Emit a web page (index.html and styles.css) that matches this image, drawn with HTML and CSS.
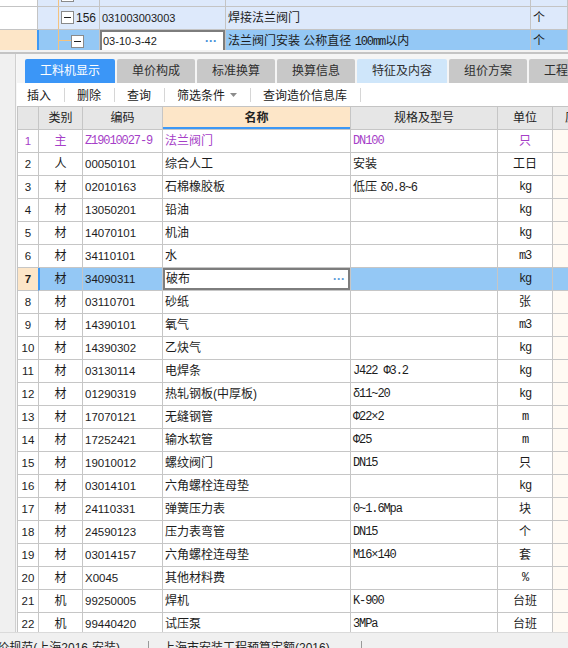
FILE: index.html
```html
<!DOCTYPE html>
<html lang="zh-CN">
<head>
<meta charset="utf-8">
<title>工料机显示</title>
<link rel="stylesheet" href="styles.css">
</head>
<body>
<div class="top">
  <div class="trow part">
    <div class="tc c0"></div>
    <div class="tc tree"><svg class="tsvg" width="61" height="7"><line x1="20.5" y1="0" x2="20.5" y2="7" stroke="#f4c27e"/><rect x="23.5" y="-10.5" width="12" height="12" fill="#fff" stroke="#8a8a8a"/></svg></div>
    <div class="tc"></div>
    <div class="tc"></div>
    <div class="tc"></div>
  </div>
  <div class="trow r156">
    <div class="tc c0"></div>
    <div class="tc tree"><svg class="tsvg" width="61" height="22"><line x1="20.5" y1="0" x2="20.5" y2="23" stroke="#f4c27e"/><rect x="23.5" y="4.5" width="12" height="12" fill="#fff" stroke="#8a8a8a"/><line x1="26" y1="10.5" x2="33" y2="10.5" stroke="#222"/></svg><span class="tnum">156</span></div>
    <div class="tc tcode">031003003003</div>
    <div class="tc">焊接法兰阀门</div>
    <div class="tc">个</div>
  </div>
  <div class="trow tsel">
    <div class="tc c0"></div>
    <div class="tc tree"><svg class="tsvg" width="61" height="22"><line x1="20.5" y1="0" x2="20.5" y2="23" stroke="#f4c27e"/><line x1="20" y1="10.5" x2="33" y2="10.5" stroke="#f4c27e"/><rect x="33.5" y="5.5" width="12" height="12" fill="#fff" stroke="#8a8a8a"/><line x1="36" y1="11.5" x2="43" y2="11.5" stroke="#222"/></svg></div>
    <div class="tc edit tcode">03-10-3-42<span class="dots">···</span></div>
    <div class="tc">法兰阀门安装 公称直径 <span class="m">100mm</span>以内</div>
    <div class="tc">个</div>
  </div>
</div>
<div class="split"></div>
<div class="body">
  <div class="side"></div>
  <div class="main">
    <div class="tabs">
      <div class="tab active">工料机显示</div>
      <div class="tab">单价构成</div>
      <div class="tab">标准换算</div>
      <div class="tab">换算信息</div>
      <div class="tab light">特征及内容</div>
      <div class="tab">组价方案</div>
      <div class="tab">工程量明细</div>
    </div>
    <div class="toolbar">
      <span class="tool first">插入</span><i class="sep"></i>
      <span class="tool">删除</span><i class="sep"></i>
      <span class="tool">查询</span><i class="sep"></i>
      <span class="tool">筛选条件<svg class="arrow" width="7" height="4"><path d="M0 0H7L3.5 4Z" fill="#8c8c8c"/></svg></span><i class="sep"></i>
      <span class="tool">查询造价信息库</span><i class="sep"></i>
    </div>
    <div class="grid">
      <div class="row hdr">
        <div class="c"></div><div class="c ctr">类别</div><div class="c ctr">编码</div><div class="c ctr nm">名称</div><div class="c ctr">规格及型号</div><div class="c ctr">单位</div><div class="c last">原价</div>
      </div>
      <div class="row purple">
        <div class="c ctr n">1</div><div class="c ctr">主</div><div class="c m">Z19010027-9</div><div class="c">法兰阀门</div><div class="c m">DN100</div><div class="c ctr">只</div><div class="c last"></div>
      </div>
      <div class="row">
        <div class="c ctr n">2</div><div class="c ctr">人</div><div class="c n">00050101</div><div class="c">综合人工</div><div class="c">安装</div><div class="c ctr">工日</div><div class="c last"></div>
      </div>
      <div class="row">
        <div class="c ctr n">3</div><div class="c ctr">材</div><div class="c n">02010163</div><div class="c">石棉橡胶板</div><div class="c">低压 <span class="m">δ0.8~6</span></div><div class="c ctr m">kg</div><div class="c last"></div>
      </div>
      <div class="row">
        <div class="c ctr n">4</div><div class="c ctr">材</div><div class="c n">13050201</div><div class="c">铅油</div><div class="c"></div><div class="c ctr m">kg</div><div class="c last"></div>
      </div>
      <div class="row">
        <div class="c ctr n">5</div><div class="c ctr">材</div><div class="c n">14070101</div><div class="c">机油</div><div class="c"></div><div class="c ctr m">kg</div><div class="c last"></div>
      </div>
      <div class="row">
        <div class="c ctr n">6</div><div class="c ctr">材</div><div class="c n">34110101</div><div class="c">水</div><div class="c"></div><div class="c ctr m">m3</div><div class="c last"></div>
      </div>
      <div class="row sel">
        <div class="c ctr n num">7</div><div class="c ctr typ">材</div><div class="c n">34090311</div><div class="c edit">破布<span class="dots">···</span></div><div class="c"></div><div class="c ctr m">kg</div><div class="c last"></div>
      </div>
      <div class="row">
        <div class="c ctr n">8</div><div class="c ctr">材</div><div class="c n">03110701</div><div class="c">砂纸</div><div class="c"></div><div class="c ctr">张</div><div class="c last"></div>
      </div>
      <div class="row">
        <div class="c ctr n">9</div><div class="c ctr">材</div><div class="c n">14390101</div><div class="c">氧气</div><div class="c"></div><div class="c ctr m">m3</div><div class="c last"></div>
      </div>
      <div class="row">
        <div class="c ctr n">10</div><div class="c ctr">材</div><div class="c n">14390302</div><div class="c">乙炔气</div><div class="c"></div><div class="c ctr m">kg</div><div class="c last"></div>
      </div>
      <div class="row">
        <div class="c ctr n">11</div><div class="c ctr">材</div><div class="c n">03130114</div><div class="c">电焊条</div><div class="c m">J422 Φ3.2</div><div class="c ctr m">kg</div><div class="c last"></div>
      </div>
      <div class="row">
        <div class="c ctr n">12</div><div class="c ctr">材</div><div class="c n">01290319</div><div class="c">热轧钢板(中厚板)</div><div class="c m">δ11~20</div><div class="c ctr m">kg</div><div class="c last"></div>
      </div>
      <div class="row">
        <div class="c ctr n">13</div><div class="c ctr">材</div><div class="c n">17070121</div><div class="c">无缝钢管</div><div class="c m">Φ22×2</div><div class="c ctr m">m</div><div class="c last"></div>
      </div>
      <div class="row">
        <div class="c ctr n">14</div><div class="c ctr">材</div><div class="c n">17252421</div><div class="c">输水软管</div><div class="c m">Φ25</div><div class="c ctr m">m</div><div class="c last"></div>
      </div>
      <div class="row">
        <div class="c ctr n">15</div><div class="c ctr">材</div><div class="c n">19010012</div><div class="c">螺纹阀门</div><div class="c m">DN15</div><div class="c ctr">只</div><div class="c last"></div>
      </div>
      <div class="row">
        <div class="c ctr n">16</div><div class="c ctr">材</div><div class="c n">03014101</div><div class="c">六角螺栓连母垫</div><div class="c"></div><div class="c ctr m">kg</div><div class="c last"></div>
      </div>
      <div class="row">
        <div class="c ctr n">17</div><div class="c ctr">材</div><div class="c n">24110331</div><div class="c">弹簧压力表</div><div class="c m">0~1.6Mpa</div><div class="c ctr">块</div><div class="c last"></div>
      </div>
      <div class="row">
        <div class="c ctr n">18</div><div class="c ctr">材</div><div class="c n">24590123</div><div class="c">压力表弯管</div><div class="c m">DN15</div><div class="c ctr">个</div><div class="c last"></div>
      </div>
      <div class="row">
        <div class="c ctr n">19</div><div class="c ctr">材</div><div class="c n">03014157</div><div class="c">六角螺栓连母垫</div><div class="c m">M16×140</div><div class="c ctr">套</div><div class="c last"></div>
      </div>
      <div class="row">
        <div class="c ctr n">20</div><div class="c ctr">材</div><div class="c n">X0045</div><div class="c">其他材料费</div><div class="c"></div><div class="c ctr m">%</div><div class="c last"></div>
      </div>
      <div class="row">
        <div class="c ctr n">21</div><div class="c ctr">机</div><div class="c n">99250005</div><div class="c">焊机</div><div class="c m">K-900</div><div class="c ctr">台班</div><div class="c last"></div>
      </div>
      <div class="row">
        <div class="c ctr n">22</div><div class="c ctr">机</div><div class="c n">99440420</div><div class="c">试压泵</div><div class="c m">3MPa</div><div class="c ctr">台班</div><div class="c last"></div>
      </div>
    </div>
  </div>
</div>
<div class="status">
  <div class="st1"><span>工程量清单计价规范(上海2016-安装)</span></div>
  <i class="ssep"></i>
  <div class="st2">上海市安装工程预算定额(2016)</div>
  <i class="ssep"></i>
</div>
</body>
</html>
```

FILE: styles.css
```css
* { box-sizing: border-box; margin: 0; padding: 0; }

body {
  width: 568px;
  height: 648px;
  overflow: hidden;
  background: #f0f0f0;
  color: #1c1c1c;
  font-family: "Liberation Sans", "Noto Sans CJK SC", sans-serif;
  font-size: 12px;
}

.n { font-size: 11.5px; }
.m {
  font-family: "Liberation Mono", "Noto Sans CJK SC", monospace;
  font-size: 12px;
  letter-spacing: -1.1px;
}

/* top tree grid */
.top { height: 50px; overflow: hidden; background: #fff; }
.trow {
  display: grid;
  grid-template-columns: 38px 62px 126px 305px 1fr;
}
.part { height: 7px; }
.r156, .tsel { height: 23px; }
.tc {
  position: relative;
  border-right: 1px solid #c4c4c4;
  border-bottom: 1px solid #c4c4c4;
  background: #dde9fb;
  line-height: 22px;
  padding: 0 2px;
  white-space: nowrap;
  overflow: hidden;
  font-size: 12px;
}
.tc.tcode { font-size: 11px; }
.tc.c0 { background: #fff; }
.tsvg { position: absolute; left: 0; top: 0; }
.tree { text-align: right; padding-right: 3px; }
.tnum { position: relative; }
.tsel .tc { background: #94c8f5; }
.tsel .c0 { background: #fde6c8; border-right-color: #3d98f5; }
.tsel .tree { box-shadow: inset 1px 0 #3d98f5; }
.tsel .edit {
  background: #fff;
  box-shadow: inset 0 0 0 2px #7d7d7d;
  padding-left: 3px;
}
.dots {
  position: absolute;
  right: 8px;
  top: 0;
  color: #3f8fd8;
  font-weight: bold;
  font-size: 12px;
  letter-spacing: 0;
}

.split {
  height: 4px;
  background: #f3f3f3;
  border-bottom: 2px solid #c4c4c4;
}

/* lower panel */
.body { display: flex; height: 578px; }
.side {
  width: 17px;
  flex: none;
  background: #f0f0f0;
  box-shadow: inset -1px 0 #f7f7f7, inset -2px 0 #d0d0d0;
}
.main {
  flex: 1;
  display: flex;
  flex-direction: column;
  overflow: hidden;
  min-width: 0;
}

.tabs {
  height: 29px;
  flex: none;
  display: flex;
  align-items: flex-end;
  gap: 2px;
  padding-left: 8px;
  background: #f5f5f5;
  overflow: hidden;
}
.tab {
  flex: none;
  height: 24px;
  line-height: 24px;
  padding: 0 15px;
  background: #c8c8c8;
  color: #2e2e2e;
  border-radius: 2px 2px 0 0;
  white-space: nowrap;
}
.tab.active { background: #3b96f7; color: #fff; }
.tab.light { background: #cfe6fa; }

.toolbar {
  height: 23px;
  flex: none;
  display: flex;
  align-items: center;
  background: #fff;
}
.tool {
  display: flex;
  align-items: center;
  padding: 0 13px 0 12px;
  white-space: nowrap;
  color: #1a1a1a;
}
.tool.first { padding-left: 10px; }
.arrow { margin-left: 5px; }
.sep {
  width: 1px;
  height: 14px;
  background: #d6d6d6;
}

.grid {
  height: 526px;
  flex: none;
  overflow: hidden;
  background: #fff;
  border-top: 1px solid #c4c4c4;
  border-left: 1px solid #c4c4c4;
}
.row {
  display: grid;
  grid-template-columns: 21px 44px 80px 188px 147px 55px 60px;
  width: 595px;
  height: 23px;
}
.c {
  position: relative;
  border-right: 1px solid #c6c6c6;
  border-bottom: 1px solid #c6c6c6;
  line-height: 22px;
  padding: 0 2px;
  white-space: nowrap;
  overflow: hidden;
}
.c.m { letter-spacing: -1.1px; }
.ctr { text-align: center; }
.c.last { background: #fffaf3; }

.hdr .c { background: #e6e6e6; color: #222; }
.hdr .nm {
  background: #fde6c8;
  font-weight: bold;
  box-shadow: inset 0 -2px #3d98f5;
}
.hdr .last { background: #e6e6e6; padding-left: 12px; }

.purple .c { color: #a63fc8; }

.sel .c { background: #94c8f5; }
.sel .num {
  background: #fde6c8;
  font-weight: bold;
  border-right-color: #3d98f5;
}
.sel .typ { box-shadow: inset 1px 0 #3d98f5; }
.sel .edit {
  background: #fff;
  box-shadow: inset 0 0 0 2px #7d7d7d;
  padding-left: 3px;
}
.sel .edit .dots { right: 5px; color: #5a9ad8; }

/* status bar */
.status {
  height: 16px;
  display: flex;
  background: #f0f0f0;
  border-top: 1px solid #dadada;
  padding-top: 7px;
  line-height: 16px;
  color: #222;
  overflow: hidden;
}
.st1 {
  width: 148px;
  flex: none;
  display: flex;
  justify-content: flex-end;
  padding-right: 28px;
  overflow: hidden;
  white-space: nowrap;
}
.st2 {
  flex: none;
  padding: 0 31px 0 14px;
  white-space: nowrap;
}
.ssep {
  width: 1px;
  height: 14px;
  margin-top: 1px;
  background: #9a9a9a;
  flex: none;
}
```
